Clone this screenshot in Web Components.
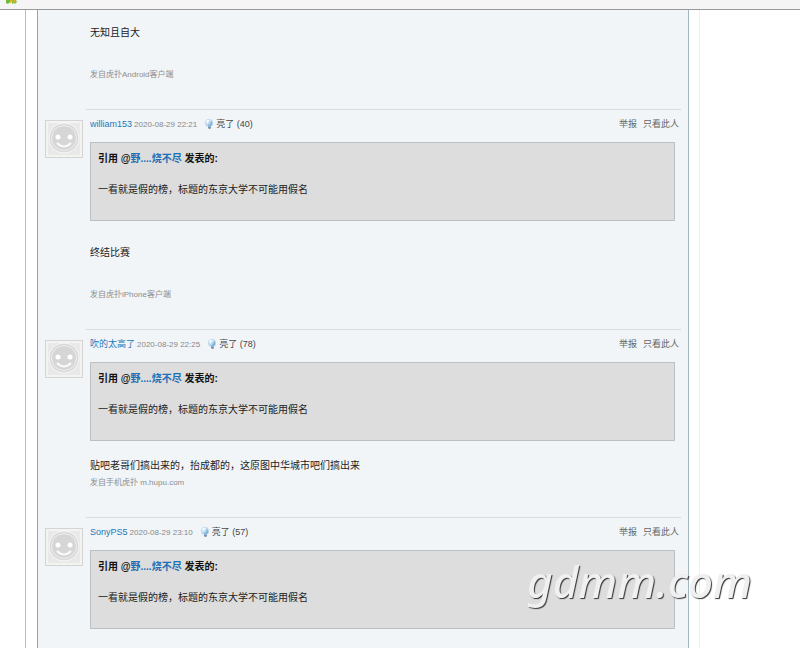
<!DOCTYPE html>
<html>
<head>
<meta charset="utf-8">
<title>虎扑</title>
<style>
    body {
        margin: 0;
        background: #fff;
        color: #222;
        font: 10px/17px "Liberation Sans", "Noto Sans CJK SC", sans-serif;
    }
</style>
</head>
<body>

<thread-page>
    <thread-post>
        <p class="app">无知且自大</p>
        <small>发自虎扑Android客户端</small>
    </thread-post>

    <thread-post user="william153" time="2020-08-29 22:21" lights="40">
        <quote-box slot="quote" user="野....烧不尽">一看就是假的榜，标题的东京大学不可能用假名</quote-box>
        <p class="app">终结比赛</p>
        <small>发自虎扑iPhone客户端</small>
    </thread-post>

    <thread-post user="吹的太高了" time="2020-08-29 22:25" lights="78">
        <quote-box slot="quote" user="野....烧不尽">一看就是假的榜，标题的东京大学不可能用假名</quote-box>
        <p>贴吧老哥们搞出来的，抬成都的，这原图中华城市吧们搞出来</p>
        <small>发自手机虎扑 m.hupu.com</small>
    </thread-post>

    <thread-post user="SonyPS5" time="2020-08-29 23:10" lights="57">
        <quote-box slot="quote" user="野....烧不尽">一看就是假的榜，标题的东京大学不可能用假名</quote-box>
    </thread-post>
</thread-page>
<water-mark>gdmm.com</water-mark>

<script>
class ThreadPage extends HTMLElement {

    constructor() {
        super()
        this.shadow = this.attachShadow({ mode: 'open' })
    }

    connectedCallback() {
        this.shadow.innerHTML =
      /*html*/`
        <style>
            :host {
                display: flex;
                flex-direction: column;
                height: 100vh;
                overflow: hidden;
            }
            header {
                flex: none;
                height: 9px;
                padding-left: 5px;
                background: #f5f5f5;
                border-bottom: 1px solid #999;
            }
            header svg {
                display: block;
            }
            .page {
                flex: 1;
                min-height: 0;
                display: flex;
                margin: 0 12.5% 0 25px;
                padding: 0 10px 0 11px;
                border-left: 1px solid #b9bcbf;
                border-right: 1px solid #eee;
            }
            main {
                flex: 1;
                padding: 0 7px;
                background: #f1f5f8;
                border-left: 1px solid #6fb0cc;
                border-right: 1px solid #9fb6c1;
            }
        </style>
        <header>
            <svg width="13" height="5" viewBox="0 0 13 5">
                <path d="M1 0h4v2l-2 2-2-1z" fill="#6cba35"/>
                <path d="M6 0h5l1 2-2 2-1-1-2 1z" fill="#8bc53f"/>
                <path d="M5 0h1v3H5zM9 0h1v2H9z" fill="#e6b32e"/>
            </svg>
        </header>
        <div class="page">
            <main><slot></slot></main>
        </div>
      `
    }
}

class ThreadPost extends HTMLElement {

    constructor() {
        super()
        this.shadow = this.attachShadow({ mode: 'open' })
    }

    connectedCallback() {
        const user = this.getAttribute('user')
        this.shadow.innerHTML =
      /*html*/`
        <style>
            :host {
                display: grid;
                grid-template-columns: 38px 1fr;
                column-gap: 3px;
            }
            user-avatar {
                margin-top: 11px;
            }
            .body {
                grid-column: 2;
                padding: 0 6px 26px 4px;
            }
            .body.line {
                padding-top: 0;
                border-top: 1px solid #d5dce1;
            }
            .head {
                display: flex;
                align-items: center;
                margin-right: -4px;
                padding: 6px 0 9px;
                font-size: 9px;
                color: #555;
            }
            a {
                color: #666;
                text-decoration: none;
            }
            .user {
                color: #2277b8;
            }
            time {
                margin-left: 2px;
                font-size: 8px;
                color: #888;
            }
            .light {
                display: flex;
                align-items: center;
                gap: 2px;
                margin-left: 7px;
                color: #444;
            }
            .tools {
                display: flex;
                gap: 6px;
                margin-left: auto;
            }
            .text {
                padding-top: 16px;
            }
            .body:not(.line) .text {
                padding-top: 7px;
            }
            ::slotted(p) {
                margin: 0;
            }
            ::slotted(p.app) {
                margin: 7px 0 25px;
            }
            ::slotted(small) {
                display: block;
                font-size: 8px;
                color: #8d8d8d;
            }
        </style>
        ${user ? '<user-avatar></user-avatar>' : ''}
        <div class="body ${user ? 'line' : ''}">
            ${user ? `
            <div class="head">
                <a class="user" href="#">${user}</a>
                <time>${this.getAttribute('time')}</time>
                <a class="light" href="#">
                    <svg width="10" height="11" viewBox="0 0 10 11">
                        <circle cx="5" cy="4" r="4" fill="#bcd9ee"/>
                        <path d="M2 2q2-2 4-1L3 5z" fill="#f6fbff"/>
                        <path d="M7 2q2 1 1 4L6 8H4V6q3-1 3-4z" fill="#86b4d8"/>
                        <path d="M4 8h3v1l-1 1H5L4 9z" fill="#7d94a8"/>
                    </svg>
                    <span>亮了 (${this.getAttribute('lights')})</span>
                </a>
                <div class="tools"><a href="#">举报</a><a href="#">只看此人</a></div>
            </div>` : ''}
            <slot name="quote"></slot>
            <div class="text"><slot></slot></div>
        </div>
      `
    }
}

class QuoteBox extends HTMLElement {

    constructor() {
        super()
        this.shadow = this.attachShadow({ mode: 'open' })
    }

    connectedCallback() {
        this.shadow.innerHTML =
      /*html*/`
        <style>
            :host {
                display: block;
                padding: 7px 7px 22px;
                background: #ddd;
                border: 1px solid #bcc0c2;
            }
            b {
                display: block;
                margin-bottom: 14px;
                color: #111;
            }
            a {
                color: #1a6fb5;
                text-decoration: none;
            }
        </style>
        <b>引用 @<a href="#">${this.getAttribute('user')}</a> 发表的:</b>
        <slot></slot>
      `
    }
}

class UserAvatar extends HTMLElement {

    constructor() {
        super()
        this.shadow = this.attachShadow({ mode: 'open' })
    }

    connectedCallback() {
        this.shadow.innerHTML =
      /*html*/`
        <style>
            :host {
                display: block;
            }
            svg {
                display: block;
            }
        </style>
        <svg width="38" height="38" viewBox="0 0 38 38">
            <rect x=".5" y=".5" width="37" height="37" fill="#f3f3f2" stroke="#d3d4d3"/>
            <rect x="3" y="3" width="32" height="32" fill="#e9e9e9"/>
            <circle cx="19" cy="18" r="15" fill="#d8d8d8" stroke="#f8f8f8"/>
            <circle cx="19" cy="18" r="12.500" fill="#d6d6d6" stroke="#f0f0f0"/>
            <circle cx="13" cy="17" r="2.500" fill="#fff"/>
            <circle cx="25" cy="17" r="2.500" fill="#fff"/>
            <path d="M12 23q7 7 14 0" fill="none" stroke="#fafafa" stroke-width="2"/>
        </svg>
      `
    }
}

class WaterMark extends HTMLElement {

    constructor() {
        super()
        this.shadow = this.attachShadow({ mode: 'open' })
    }

    connectedCallback() {
        this.shadow.innerHTML =
      /*html*/`
        <style>
            :host {
                position: fixed;
                right: 48px;
                bottom: 42px;
                color: #f0f0f0;
                font: italic 500 44px/50px "Noto Sans", sans-serif;
                text-shadow: 1px 1px 1px #333;
                pointer-events: none;
            }
        </style>
        <slot></slot>
      `
    }
}

customElements.define('thread-page', ThreadPage);
customElements.define('thread-post', ThreadPost);
customElements.define('quote-box', QuoteBox);
customElements.define('user-avatar', UserAvatar);
customElements.define('water-mark', WaterMark);
</script>
</body>
</html>
